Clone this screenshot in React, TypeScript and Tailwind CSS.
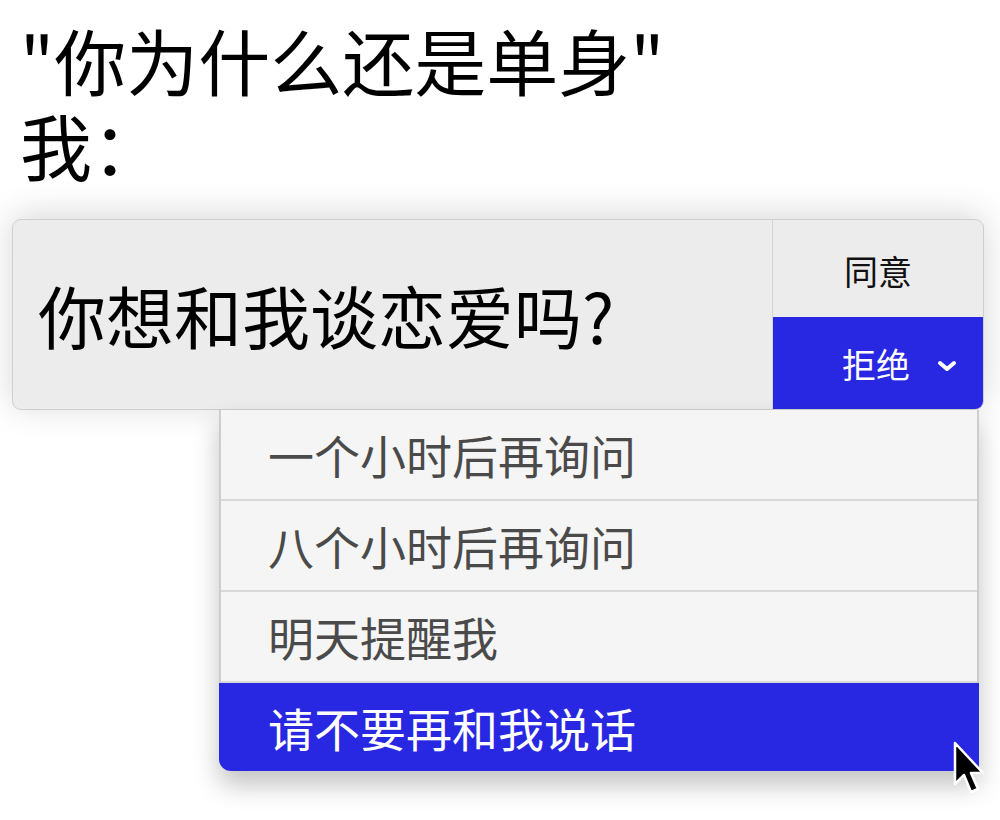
import React from "react";

const font = { fontFamily: '"Noto Sans CJK SC", "Noto Sans", sans-serif' };

function Chevron() {
  return (
    <svg width="22" height="14" viewBox="0 0 22 14" className="block mt-[6px]">
      <polyline points="4,4 11,10 18,4" fill="none" stroke="white" strokeWidth="4" strokeLinecap="round" strokeLinejoin="round" />
    </svg>
  );
}

function Cursor() {
  return (
    <svg width="36" height="60" viewBox="0 0 36 60" className="absolute left-[731px] top-[330px]">
      <path d="M3 3 L3 44 L12 35 L19 52 L26 49 L19 33 L31 33 Z" fill="#000" stroke="#fff" strokeWidth="2.5" strokeLinejoin="round" />
    </svg>
  );
}

export default function App() {
  const items = ["一个小时后再询问", "八个小时后再询问", "明天提醒我"];
  return (
    <div className="w-[1000px] h-[820px] bg-white overflow-hidden text-black" style={font}>
      <div className="pl-[20px] pt-[16px] text-[72px] font-normal">
        <div className="h-[85px] leading-[85px]">"你为什么还是单身"</div>
        <div className="h-[85px] leading-[85px]">我：</div>
      </div>
      <div className="mt-[33px] pl-[12px]">
        <div className="w-[972px] h-[191px] flex rounded-[9px] border border-[#cfcfcf] bg-[#ececec] shadow-[0_-4px_34px_rgba(0,0,0,0.16)] overflow-hidden">
          <div className="w-[760px] flex items-center pl-[25px] text-[68px] leading-none text-black border-r border-[#d4d4d4]">
            你想和我谈恋爱吗?
          </div>
          <div className="flex-1 flex flex-col">
            <div className="h-[97px] flex items-center justify-center text-[34px] text-[#111] pt-[4px]">同意</div>
            <div className="flex-1 bg-[#2828e2] flex items-center pl-[69px] gap-[26px] text-[34px] text-white">
              <span>拒绝</span>
              <Chevron />
            </div>
          </div>
        </div>
        <div className="ml-[207px] w-[760px] relative bg-[#f5f5f5] border-x-2 border-[#cdcdcd] rounded-bl-[12px] shadow-[0_14px_26px_rgba(0,0,0,0.24)]">
          {items.map((t) => (
            <div key={t} className="h-[91px] flex items-center pl-[47px] text-[46px] text-[#4a4a4a] border-b-2 border-[#d8d8d8]">
              {t}
            </div>
          ))}
          <div className="h-[88px] -mx-[2px] flex items-center pl-[49px] text-[46px] text-white bg-[#2828e2] rounded-bl-[12px]">
            请不要再和我说话
          </div>
          <Cursor />
        </div>
      </div>
    </div>
  );
}
